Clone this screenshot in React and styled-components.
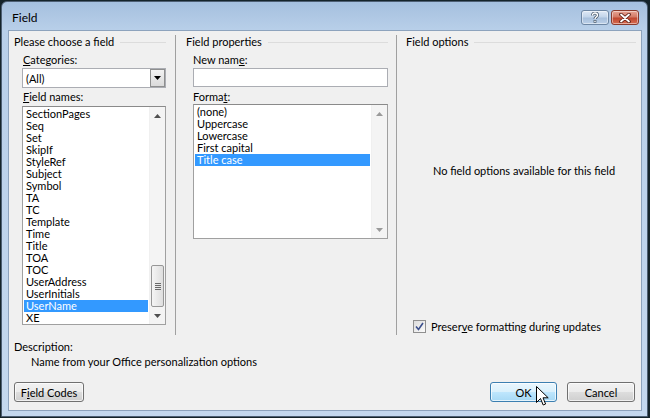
import React from 'react'
import styled, { createGlobalStyle } from 'styled-components'

const GlobalStyle = createGlobalStyle`
  html, body { margin: 0; padding: 0; background: #15242a; }
  body {
    font-family: Lato, "Liberation Sans", sans-serif;
    font-size: 11px;
    color: #000;
  }
  * { box-sizing: border-box; }
`

const fieldNames = [
  'SectionPages', 'Seq', 'Set', 'SkipIf', 'StyleRef', 'Subject', 'Symbol', 'TA', 'TC',
  'Template', 'Time', 'Title', 'TOA', 'TOC', 'UserAddress', 'UserInitials', 'UserName', 'XE',
]
const formats = ['(none)', 'Uppercase', 'Lowercase', 'First capital', 'Title case']

const Screen = styled.div`
  position: relative;
  width: 650px;
  height: 418px;
  padding: 1px 2px 1px 1px;
  background: #15242a;
`

const Window = styled.div`
  width: 100%;
  height: 100%;
  display: flex;
  flex-direction: column;
  border: 1px solid #4d5f73;
  border-radius: 6px 6px 0 0;
  padding: 0 5px 5px 6px;
  background: linear-gradient(to bottom, #a5c0de 0, #b8cfe9 28px, #c4d8ee 100%);
`

const TitleBar = styled.div`
  height: 28px;
  display: flex;
  align-items: flex-start;
`

const Title = styled.div`
  margin: 9px 0 0 4px;
  font-size: 12px;
  line-height: 14px;
`

const Controls = styled.div`
  margin: 8px 3px 0 auto;
  display: flex;
  gap: 2px;
`

const CaptionButton = styled.div`
  width: 28px;
  height: 15px;
  border-radius: 3px;
  display: flex;
  align-items: center;
  justify-content: center;
  border: 1px solid ${p => (p.$close ? '#8a3a2c' : '#6d86a3')};
  background: ${p =>
    p.$close
      ? 'linear-gradient(to bottom, #e8a493 0, #d37a66 45%, #c0472f 55%, #d66b50 100%)'
      : 'linear-gradient(to bottom, #dfe9f5 0, #c3d5ea 45%, #a8c0dc 55%, #bcd0e8 100%)'};
  box-shadow: inset 0 0 0 1px rgba(255,255,255,0.45);
`

const Client = styled.div`
  flex: 1;
  display: flex;
  flex-direction: column;
  border: 1px solid #8da3bd;
  background: #f0f0f0;
`

const Columns = styled.div`
  display: flex;
  height: 300px;
  margin-top: 4px;
`

const Column = styled.div`
  width: ${p => p.$width || 'auto'};
  flex: ${p => (p.$width ? 'none' : 1)};
  display: flex;
  flex-direction: column;
  padding: ${p => p.$pad};
  border-right: ${p => (p.$divider ? '1px solid #a0a0a0' : 'none')};
`

const GroupHeader = styled.div`
  display: flex;
  align-items: center;
  height: 14px;
  line-height: 14px;
  white-space: nowrap;

  &::after {
    content: '';
    flex: 1;
    height: 1px;
    margin-left: 6px;
    background: #dcdcdc;
  }
`

const Label = styled.div`
  height: 14px;
  line-height: 14px;
  margin: ${p => p.$m || '0'};
  white-space: nowrap;
`

const U = styled.span`
  text-decoration: underline;
  text-underline-offset: 1px;
`

const Combo = styled.div`
  margin: 1px 0 0 8px;
  height: 20px;
  display: flex;
  align-items: center;
  border: 1px solid #abadb3;
  background: #fff;
  padding-left: 3px;
`

const ComboText = styled.div`
  flex: 1;
`

const DropButton = styled.div`
  width: 15px;
  height: 18px;
  display: flex;
  align-items: center;
  justify-content: center;
  border: 1px solid #8e8f8f;
  background: linear-gradient(to bottom, #f2f2f2, #dadada);
`

const TextInput = styled.div`
  margin: 1px 0 0 7px;
  height: 19px;
  border: 1px solid #abadb3;
  background: #fff;
`

const ListBox = styled.div`
  margin: ${p => p.$m};
  height: ${p => p.$h}px;
  display: flex;
  border: 1px solid #a0a0a0;
  border-top-color: #8a8a8a;
  background: #fff;
  overflow: hidden;
`

const Items = styled.div`
  flex: 1;
  padding: 1px 1px 0 1px;
  overflow: hidden;
`

const Item = styled.div`
  height: 12px;
  line-height: 12px;
  padding-left: 2px;
  white-space: nowrap;
  background: ${p => (p.$selected ? '#3399ff' : 'transparent')};
  color: ${p => (p.$selected ? '#fff' : '#000')};
`

const ScrollBar = styled.div`
  width: 16px;
  position: relative;
  display: flex;
  flex-direction: column;
  align-items: center;
  background: #f4f4f4;
  border-left: 1px solid #f0f0f0;
`

const Arrow = styled.div`
  height: 14px;
  display: flex;
  align-items: center;
  justify-content: center;
  margin-top: ${p => (p.$down ? 'auto' : '2px')};
  margin-bottom: ${p => (p.$down ? '1px' : '0')};
`

const Thumb = styled.div`
  position: absolute;
  left: 1px;
  top: ${p => p.$top}px;
  width: 13px;
  height: ${p => p.$h}px;
  border: 1px solid #979797;
  border-radius: 2px;
  background: linear-gradient(to right, #f5f5f5, #dedede);
  display: flex;
  flex-direction: column;
  align-items: center;
  justify-content: center;
  gap: 1px;

  span {
    width: 6px;
    height: 1px;
    background: #6a6a6a;
  }
`

const Message = styled.div`
  margin-top: 115px;
  text-align: center;
  height: 14px;
  line-height: 14px;
  padding-left: 6px;
`

const CheckRow = styled.div`
  margin: auto 0 2px 7px;
  display: flex;
  align-items: center;
  gap: 5px;
  height: 14px;
`

const CheckBox = styled.div`
  width: 13px;
  height: 13px;
  border: 1px solid #8f8f8f;
  background: linear-gradient(135deg, #dcdcdc, #fbfbfb);
  display: flex;
  align-items: center;
  justify-content: center;
`

const Bottom = styled.div`
  display: flex;
  flex-direction: column;
  padding: 0 6px 0 5px;
  margin-top: 5px;
`

const DescText = styled.div`
  height: 14px;
  line-height: 14px;
  margin: 1px 0 0 17px;
`

const ButtonRow = styled.div`
  display: flex;
  gap: 10px;
  margin-top: 13px;
`

const Button = styled.div`
  width: ${p => p.$w}px;
  height: 20px;
  margin-left: ${p => (p.$push ? 'auto' : '0')};
  display: flex;
  align-items: center;
  justify-content: center;
  border-radius: 3px;
  border: 1px solid ${p => (p.$hot ? '#3c7fb1' : '#707070')};
  background: ${p =>
    p.$hot
      ? 'linear-gradient(to bottom, #eaf6fd 0, #d9f0fc 50%, #bee6fd 51%, #a7d9f5 100%)'
      : 'linear-gradient(to bottom, #f2f2f2 0, #ebebeb 50%, #dddddd 51%, #cfcfcf 100%)'};
  box-shadow: inset 0 0 0 1px rgba(255,255,255,0.7);
`

const Cursor = styled.svg`
  position: absolute;
  left: 536px;
  top: 386px;
`

const UpTri = ({ color }) => (
  <svg width="7" height="4" viewBox="0 0 7 4"><path d="M3.5 0L7 4H0z" fill={color} /></svg>
)
const DownTri = ({ color }) => (
  <svg width="7" height="4" viewBox="0 0 7 4"><path d="M0 0h7L3.5 4z" fill={color} /></svg>
)

const List = ({ items, selected, height, m, thumb, arrowColor }) => (
  <ListBox $h={height} $m={m}>
    <Items>
      {items.map(it => (
        <Item key={it} $selected={it === selected}>{it}</Item>
      ))}
    </Items>
    <ScrollBar>
      <Arrow><UpTri color={arrowColor} /></Arrow>
      {thumb && (
        <Thumb $top={thumb.top} $h={thumb.h}>
          <span /><span /><span /><span />
        </Thumb>
      )}
      <Arrow $down><DownTri color={arrowColor} /></Arrow>
    </ScrollBar>
  </ListBox>
)

export default function App() {
  return (
    <Screen>
      <GlobalStyle />
      <Window>
        <TitleBar>
          <Title>Field</Title>
          <Controls>
            <CaptionButton>
              <svg width="10" height="11" viewBox="0 0 10 11">
                <path d="M2.5 3.5C2.5 1.6 3.8 1 5 1s2.5.7 2.5 2.2C7.5 5 5 5 5 7" fill="none" stroke="#4a5a6c" strokeWidth="3" />
                <path d="M2.5 3.5C2.5 1.6 3.8 1 5 1s2.5.7 2.5 2.2C7.5 5 5 5 5 7" fill="none" stroke="#fff" strokeWidth="1.4" />
                <rect x="3.6" y="8" width="2.8" height="2.8" fill="#4a5a6c" />
                <rect x="4.3" y="8.7" width="1.4" height="1.4" fill="#fff" />
              </svg>
            </CaptionButton>
            <CaptionButton $close>
              <svg width="12" height="10" viewBox="0 0 12 10">
                <path d="M2 1.5L10 8.5M10 1.5L2 8.5" stroke="#5a1e14" strokeWidth="3.6" strokeLinecap="round" />
                <path d="M2 1.5L10 8.5M10 1.5L2 8.5" stroke="#fff" strokeWidth="1.8" strokeLinecap="round" />
              </svg>
            </CaptionButton>
          </Controls>
        </TitleBar>

        <Client>
          <Columns>
            <Column $width="167px" $pad="0 9px 0 5px" $divider>
              <GroupHeader>Please choose a field</GroupHeader>
              <Label $m="4px 0 0 9px"><U>C</U>ategories:</Label>
              <Combo>
                <ComboText>(All)</ComboText>
                <DropButton><DownTri color="#000" /></DropButton>
              </Combo>
              <Label $m="2px 0 0 9px"><U>F</U>ield names:</Label>
              <List
                items={fieldNames}
                selected="UserName"
                height={219}
                m="2px 0 0 8px"
                thumb={{ top: 158, h: 42 }}
                arrowColor="#505050"
              />
            </Column>

            <Column $width="221px" $pad="0 8px 0 10px" $divider>
              <GroupHeader>Field properties</GroupHeader>
              <Label $m="4px 0 0 7px">New nam<U>e</U>:</Label>
              <TextInput />
              <Label $m="3px 0 0 7px">Forma<U>t</U>:</Label>
              <List
                items={formats}
                selected="Title case"
                height={135}
                m="0 0 0 7px"
                arrowColor="#9a9a9a"
              />
            </Column>

            <Column $pad="0 5px 0 9px">
              <GroupHeader>Field options</GroupHeader>
              <Message>No field options available for this field</Message>
              <CheckRow>
                <CheckBox>
                  <svg width="9" height="9" viewBox="0 0 9 9">
                    <path d="M1 4.5L3.5 7.5L8 1" fill="none" stroke="#3b4f8c" strokeWidth="1.6" />
                  </svg>
                </CheckBox>
                <span>Preser<U>v</U>e formatting during updates</span>
              </CheckRow>
            </Column>
          </Columns>

          <Bottom>
            <Label>Description:</Label>
            <DescText>Name from your Office personalization options</DescText>
            <ButtonRow>
              <Button $w={70}>F<U>i</U>eld Codes</Button>
              <Button $w={67} $push $hot>OK</Button>
              <Button $w={68}>Cancel</Button>
            </ButtonRow>
          </Bottom>
        </Client>
      </Window>

      <Cursor width="13" height="21" viewBox="0 0 13 21">
        <path d="M0.5 0.5V16.5L4.5 12.5L7.2 19L9.6 18L7 11.8H12.2Z" fill="#fff" stroke="#000" strokeWidth="1" strokeLinejoin="round" />
      </Cursor>
    </Screen>
  )
}
